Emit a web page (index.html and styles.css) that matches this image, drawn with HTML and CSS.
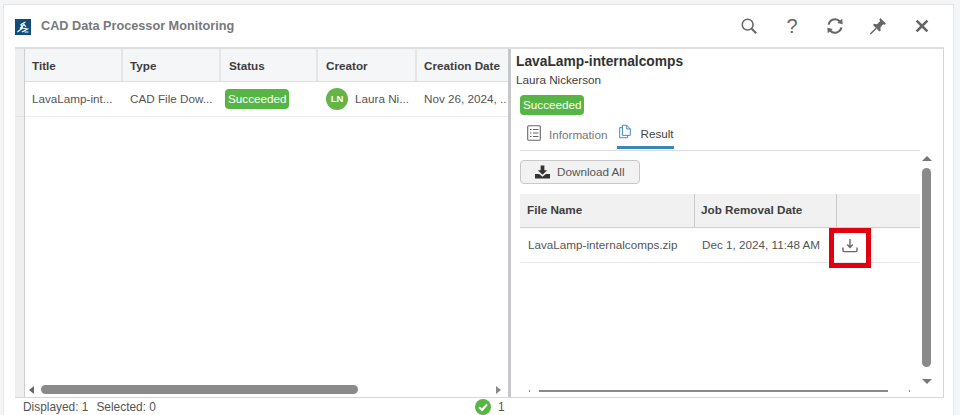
FILE: index.html
```html
<!DOCTYPE html>
<html lang="en">
<head>
<meta charset="utf-8">
<title>CAD Data Processor Monitoring</title>
<link rel="stylesheet" href="styles.css">
</head>
<body>
<div class="window">
  <header class="titlebar">
    <svg class="logo" viewBox="0 0 16 16"><rect width="16" height="16" fill="#0f4d7c"/><path d="M2.5 13 L7.5 9 L6 5.5 L10.5 3 M7.5 9 L12.5 10 L7 13 M5 9.5 L9 5.5 L11 8 M9.5 13 H13.5" fill="none" stroke="#fff" stroke-width="1.2"/></svg>
    <h1 class="wintitle">CAD Data Processor Monitoring</h1>
    <div class="tools">
      <svg class="tool" viewBox="0 0 20 20"><circle cx="8.5" cy="8.5" r="6" fill="none" stroke="#666" stroke-width="1.7"/><path d="M13 13 L18 18" stroke="#666" stroke-width="2.2"/></svg>
      <span class="tool help">?</span>
      <svg class="tool" viewBox="0 0 20 20"><path d="M3 8.5 A7.2 7.2 0 0 1 15.5 5 M17 11.5 A7.2 7.2 0 0 1 4.5 15" fill="none" stroke="#666" stroke-width="2.4"/><path d="M12.5 6.8 L18.5 8 L18 2 Z M7.5 13.2 L1.5 12 L2 18 Z" fill="#666"/></svg>
      <svg class="tool" viewBox="0 0 20 20"><path d="M12.5 1 L19 7.5 L17.3 8.6 L15.8 8 L12.6 11.6 L13 15 L11.5 16 L4.5 9 L5.5 7.6 L9 8 L12.4 4.5 L11.5 2.8 Z" fill="#666"/><path d="M8 12.5 L1.5 19" stroke="#666" stroke-width="1.6"/></svg>
      <svg class="tool close" viewBox="0 0 20 20"><path d="M4 4 L16 16 M16 4 L4 16" stroke="#666" stroke-width="3"/></svg>
    </div>
  </header>
  <main class="panel">
    <div class="gutter"><div class="gutter-cell"></div></div>
    <section class="listpane">
      <div class="grid">
        <div class="gridhead">
          <div class="hcell c1">Title</div>
          <div class="hcell c2">Type</div>
          <div class="hcell c3">Status</div>
          <div class="hcell c4">Creator</div>
          <div class="hcell c5">Creation Date</div>
        </div>
        <div class="gridrow">
          <div class="cell c1"><span class="clip">LavaLamp-int...</span></div>
          <div class="cell c2"><span class="clip">CAD File Dow...</span></div>
          <div class="cell c3 statuscell"><span class="badge rowbadge">Succeeded</span></div>
          <div class="cell c4 creatorcell"><span class="avatar">LN</span><span class="clip">Laura Ni...</span></div>
          <div class="cell c5"><span class="clip">Nov 26, 2024, ..</span></div>
        </div>
      </div>
      <div class="hscroll">
        <span class="arrow-left"></span>
        <div class="track"><div class="thumb"></div></div>
        <span class="arrow-right"></span>
      </div>
    </section>
    <div class="splitter"></div>
    <section class="detail">
      <div class="detailmain">
        <h2 class="dtitle">LavaLamp-internalcomps</h2>
        <div class="dauthor">Laura Nickerson</div>
        <span class="badge dbadge">Succeeded</span>
        <nav class="tabs">
          <div class="tab">
            <svg class="tabicon" viewBox="0 0 14 16"><rect x="0.7" y="0.7" width="12.6" height="14.6" rx="1" fill="none" stroke="#666" stroke-width="1.1"/><path d="M3 4.5h1.5M6 4.5h5.5M3 8h1.5M6 8h5.5M3 11.5h1.5M6 11.5h5.5" stroke="#666" stroke-width="1.2"/></svg>
            <span>Information</span>
          </div>
          <div class="tab active">
            <svg class="tabicon" viewBox="0 0 14 16"><path d="M4 .7 H9 L13.2 5 V12.5 H4 Z M9 .7 V5 H13.2 M4 3.5 H.8 V15.3 H10 V12.5" fill="none" stroke="#3a86b8" stroke-width="1.1"/></svg>
            <span>Result</span>
          </div>
        </nav>
        <button class="dlall" type="button">
          <svg class="dlicon" viewBox="0 0 16 14"><path d="M6 0h4v5h3L8 10 3 5h3z M0 9h4.5L8 12l3.5-3H16v5H0z" fill="#333"/></svg>
          <span>Download All</span>
        </button>
        <div class="filetable">
          <div class="fhead">
            <div class="fh f1">File Name</div>
            <div class="fh f2">Job Removal Date</div>
            <div class="fh f3"></div>
          </div>
          <div class="frow">
            <div class="fc f1">LavaLamp-internalcomps.zip</div>
            <div class="fc f2">Dec 1, 2024, 11:48 AM</div>
            <div class="fc f3">
              <svg class="rowdl" viewBox="0 0 17 15"><path d="M8.5 0.5V9M5.5 6.5 L8.5 9.5 L11.5 6.5" fill="none" stroke="#666" stroke-width="1.5"/><path d="M1 9.5V12.5Q1 14 2.5 14H14.5Q16 14 16 12.5V9.5" fill="none" stroke="#666" stroke-width="1.5"/></svg>
              <span class="redbox"></span>
            </div>
          </div>
        </div>
        <div class="thinbar">
          <span class="dot dot-l"></span><div class="thinthumb"></div><span class="dot dot-r"></span>
        </div>
      </div>
      <div class="vscroll">
        <span class="arrow-up"></span>
        <div class="vthumb"></div>
        <span class="arrow-down"></span>
      </div>
    </section>
  </main>
  <footer class="statusbar">
    <span class="counts">Displayed: 1</span>
    <span class="counts sel">Selected: 0</span>
    <span class="okwrap">
      <svg class="ok" viewBox="0 0 16 16"><circle cx="8" cy="8" r="8" fill="#57b546"/><path d="M4 8.2 L7 11 L12 5.5" fill="none" stroke="#fff" stroke-width="2"/></svg>
      <span>1</span>
    </span>
  </footer>
</div>
</body>
</html>
```
FILE: styles.css
```css
* { box-sizing: border-box; }
html, body { margin: 0; height: 100%; }
body {
  background: #f4f5f6;
  font-family: "Liberation Sans", Arial, sans-serif;
  color: #3d3d3d;
  overflow: hidden;
}
.window {
  width: 951px;
  height: 411px;
  margin: 4px 0 0 3px;
  background: #fff;
  border: 1px solid #e6e6e6;
  border-bottom: 0;
  display: flex;
  flex-direction: column;
}
.titlebar {
  height: 42px;
  flex: none;
  display: flex;
  align-items: center;
  padding: 0 0 0 11px;
}
.logo { width: 16px; height: 16px; flex: none; margin-top: 1px; }
.wintitle {
  margin: 0 0 0 10px;
  font-size: 12.7px;
  font-weight: 700;
  color: #77797c;
  flex: 1;
}
.tools { display: flex; align-items: center; padding-right: 22px; gap: 25px; }
.tool { width: 18px; height: 18px; flex: none; display: block; }
.close { margin-left: 1px; }
.help {
  font-size: 20px;
  font-weight: 400;
  line-height: 18px;
  text-align: center;
  color: #666;
}
.panel {
  height: 351px;
  flex: none;
  margin-left: 11px;
  width: 929px;
  display: flex;
  border: 1px solid #d6d6d6;
  border-left: 0;
  border-top: 2px solid #dedede;
}
.gutter {
  width: 10px;
  flex: none;
  background: #efefef;
  border-right: 1px solid #cfcfcf;
}
.gutter-cell { height: 68px; border-bottom: 1px solid #e3e3e3; }
.listpane {
  width: 483px;
  flex: none;
  display: flex;
  flex-direction: column;
  min-width: 0;
}
.grid { flex: 1; }
.gridhead {
  display: flex;
  height: 33px;
  background: #f5f6f7;
  border-bottom: 1px solid #dedede;
}
.hcell {
  font-size: 11.7px;
  font-weight: 700;
  line-height: 33px;
  padding-left: 7px;
  border-right: 2px solid #e6e6e6;
  color: #3d3d3d;
}
.hcell.c3, .hcell.c4 { padding-left: 8px; }
.c1 { width: 98px; }
.c2 { width: 98px; }
.c3 { width: 97px; }
.c4 { width: 99px; }
.c5 { width: 91px; border-right: 0; }
.gridrow {
  display: flex;
  height: 35px;
  padding-bottom: 2px;
  border-bottom: 1px solid #ececec;
  font-size: 11.7px;
  color: #555;
}
.cell {
  display: flex;
  align-items: center;
  padding-left: 7px;
  white-space: nowrap;
  overflow: hidden;
}
.statuscell { padding-left: 4px; }
.badge {
  display: inline-block;
  background: #57b546;
  color: #fff;
  font-size: 11.7px;
  line-height: 20px;
  height: 20px;
  padding: 0 3px;
  border-radius: 4px;
}
.rowbadge { margin-top: 2px; }
.creatorcell { padding-left: 8px; }
.avatar {
  width: 22px;
  height: 22px;
  border-radius: 50%;
  background: #64b446;
  color: #fff;
  font-size: 9.5px;
  font-weight: 700;
  line-height: 22px;
  text-align: center;
  margin: 2px 7px 0 0;
  flex: none;
}
.hscroll {
  height: 13px;
  flex: none;
  margin-bottom: 1px;
  display: flex;
  align-items: center;
  padding: 0 7px 0 4px;
}
.arrow-left, .arrow-right { width: 0; height: 0; flex: none; border-style: solid; }
.arrow-left { border-width: 4px 5px 4px 0; border-color: transparent #666 transparent transparent; }
.arrow-right { border-width: 4px 0 4px 5px; border-color: transparent transparent transparent #888; }
.track { flex: 1; padding: 0 0 0 7px; }
.thumb { width: 317px; height: 9px; border-radius: 5px; background: #8a8a8a; }
.splitter {
  width: 3px;
  flex: none;
  background: #c6c7cb;
}
.detail {
  flex: 1;
  min-width: 0;
  display: flex;
}
.detailmain {
  width: 409px;
  flex: none;
  padding: 4px 0 0 5px;
  display: flex;
  flex-direction: column;
  align-items: flex-start;
  overflow: hidden;
}
.dtitle {
  margin: 0;
  font-size: 13.8px;
  line-height: 18px;
  font-weight: 700;
  color: #333;
}
.dauthor { font-size: 11.7px; line-height: 18px; color: #3d3d3d; }
.dbadge { margin: 6px 0 0 4px; flex: none; }
.tabs {
  width: 400px;
  flex: none;
  margin: 7px 0 0 4px;
  height: 29px;
  border-bottom: 1px solid #dcdcdc;
  display: flex;
  padding-left: 7px;
  gap: 10px;
  font-size: 11.7px;
  color: #777;
}
.tab {
  display: flex;
  align-items: center;
  gap: 8px;
  height: 24px;
}
.tab .tabicon { margin-top: -3px; }
.tab.active { color: #444; border-bottom: 3px solid #3a86b8; height: 27px; padding-bottom: 1px; padding-left: 2px; gap: 9px; }
.tab.active .tabicon { margin-top: -4px; width: 12px; height: 15px; }
.tabicon { width: 14px; height: 16px; flex: none; }
.dlall {
  margin: 9px 0 0 4px;
  width: 120px;
  height: 24px;
  flex: none;
  padding: 0 0 2px 14px;
  background: #f2f2f2;
  border: 1px solid #c8c8c8;
  border-radius: 4px;
  font: 11.7px "Liberation Sans", Arial, sans-serif;
  color: #555;
  display: flex;
  align-items: center;
  gap: 7px;
}
.dlicon { width: 15px; height: 14px; flex: none; margin-top: 2px; }
.filetable { width: 400px; margin: 10px 0 0 4px; flex: none; }
.fhead {
  display: flex;
  height: 34px;
  background: #f1f1f1;
  border-bottom: 1px solid #cfcfcf;
}
.fh {
  font-size: 11.7px;
  font-weight: 700;
  line-height: 32px;
  padding-left: 7px;
  border-right: 1px solid #c9c9c9;
  color: #3d3d3d;
}
.fh.f2 { padding-left: 6px; }
.fh.f3 { border-right: 0; }
.f1 { width: 175px; }
.f2 { width: 142px; }
.f3 { width: 83px; }
.frow {
  display: flex;
  height: 35px;
  padding-bottom: 2px;
  border-bottom: 1px solid #e8e8e8;
  font-size: 11.7px;
  color: #555;
}
.fc { display: flex; align-items: center; padding-left: 8px; white-space: nowrap; }
.fc.f2 { padding-left: 7px; }
.fc.f3 { position: relative; padding-left: 5px; }
.rowdl { width: 16px; height: 15px; margin-top: 2px; }
.redbox {
  position: absolute;
  left: -8px;
  top: 0;
  width: 42px;
  height: 40px;
  border: 5px solid #e1000f;
}
.thinbar {
  margin-top: auto;
  margin-bottom: 4px;
  margin-left: 13px;
  height: 5px;
  display: flex;
  align-items: center;
}
.dot { width: 1px; height: 2px; background: #888; flex: none; }
.dot-l { margin-right: 9px; }
.dot-r { margin-left: 21px; }
.thinthumb { width: 349px; height: 2px; background: #8a8a8a; flex: none; }
.vscroll {
  width: 13px;
  flex: none;
  display: flex;
  flex-direction: column;
  align-items: center;
  padding-top: 107px;
}
.arrow-up, .arrow-down { width: 0; height: 0; flex: none; border-style: solid; }
.arrow-up { border-width: 0 5px 5px; border-color: transparent transparent #777; }
.arrow-down { border-width: 5px 5px 0; border-color: #777 transparent transparent; margin-top: 12px; }
.vthumb { width: 9px; height: 199px; margin-top: 7px; border-radius: 5px; background: #8a8a8a; flex: none; }
.statusbar {
  flex: 1;
  display: flex;
  align-items: center;
  padding-left: 19px;
  font-size: 11.9px;
  color: #555;
}
.sel { margin-left: 8px; }
.okwrap { display: flex; align-items: center; gap: 7px; margin-left: 319px; }
.ok { width: 16px; height: 16px; flex: none; }
```
